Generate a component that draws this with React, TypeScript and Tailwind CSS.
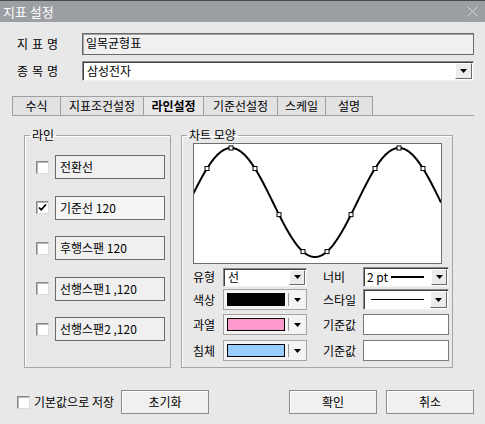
import React from 'react'

const tabs = [
  { label: '수식', w: 'w-[48px]' },
  { label: '지표조건설정', w: 'w-[83px]' },
  { label: '라인설정', w: 'w-[60px]', active: true },
  { label: '기준선설정', w: 'w-[74px]' },
  { label: '스케일', w: 'w-[48px]' },
  { label: '설명', w: 'w-[48px]' },
]

const lines = [
  { label: '전환선', checked: false },
  { label: '기준선 120', checked: true },
  { label: '후행스팬 120', checked: false },
  { label: '선행스팬1 ,120', checked: false },
  { label: '선행스팬2 ,120', checked: false },
]

// sine wave in page coordinates (chart inner area starts at 193,144)
const PEAK = 230
const PERIOD = 168
const MID = 202.5
const AMP = 54.5
const waveY = (x: number) => MID - AMP * Math.cos(((x - PEAK) / PERIOD) * Math.PI * 2)
const wavePath = Array.from({ length: 249 }, (_, i) => {
  const x = 192 + i
  return `${i === 0 ? 'M' : 'L'}${x} ${waveY(x).toFixed(2)}`
}).join(' ')
const markers = Array.from({ length: 10 }, (_, i) => 206 + i * 24)

function Arrow() {
  return (
    <svg width="7" height="4" viewBox="0 0 7 4">
      <path d="M0 0h7L3.5 4z" fill="#000" />
    </svg>
  )
}

function DropBtn({ className = '' }: { className?: string }) {
  return (
    <div className={`flex items-center justify-center bg-[#ececec] border border-t-white border-l-white border-r-[#6b6b6b] border-b-[#6b6b6b] ${className}`}>
      <Arrow />
    </div>
  )
}

function CheckBox({ checked }: { checked?: boolean }) {
  return (
    <div className="w-[13px] h-[13px] shrink-0 bg-white border border-[#8a8a8a] border-r-[#dcdcdc] border-b-[#dcdcdc] shadow-[inset_1px_1px_0_#b5b5b5] flex items-center justify-center">
      {checked && (
        <svg width="9" height="9" viewBox="0 0 9 9">
          <path d="M1 4.5l2.2 2.3L8 1.5" stroke="#000" strokeWidth="1.8" fill="none" />
        </svg>
      )}
    </div>
  )
}

function ColorCombo({ color }: { color: string }) {
  return (
    <div className="w-[84px] h-full bg-[#f4f4f4] border border-[#a3a3a3] flex items-center pl-[3px]">
      <div className={`w-[58px] h-[13px] border border-black ${color}`} />
      <div className="w-px h-[13px] bg-[#9a9a9a] ml-[3px]" />
      <div className="ml-[5px]">
        <Arrow />
      </div>
    </div>
  )
}

function Btn({ label }: { label: string }) {
  return (
    <button className="w-[88px] h-[24px] bg-[#f0f0f0] border border-[#8c8c8c] shadow-[inset_1px_1px_0_#fff] text-[12px] text-black">
      {label}
    </button>
  )
}

export default function App() {
  return (
    <div className="w-[485px] h-[424px] bg-[#e8e8e8] font-['Noto_Sans_CJK_KR','Noto_Sans',sans-serif] text-[12px] text-black leading-none overflow-hidden select-none">

      {/* Title bar */}
      <div className="h-[22px] border-t border-[#4a4a4a] bg-[#9b9ea3] flex items-center justify-between pl-[3px] pr-[7px]">
        <span className="text-white text-[13px] leading-none">지표 설정</span>
        <svg width="11" height="11" viewBox="0 0 11 11">
          <path d="M0.5 0.5l10 10M10.5 0.5l-10 10" stroke="#dadada" strokeWidth="1" />
        </svg>
      </div>

      {/* 지표명 */}
      <div className="flex items-center mt-[11px] ml-[17px]">
        <div className="w-[65px] flex gap-[4px]">
          <span>지</span><span>표</span><span>명</span>
        </div>
        <div className="w-[392px] h-[22px] bg-[#f0f0f0] border border-[#6a6a6a] shadow-[inset_1px_1px_0_#a0a0a0] pl-[3px] pt-[3px]">
          일목균형표
        </div>
      </div>

      {/* 종목명 */}
      <div className="flex items-center mt-[6px] ml-[17px]">
        <div className="w-[65px] flex gap-[4px]">
          <span>종</span><span>목</span><span>명</span>
        </div>
        <div className="w-[392px] h-[20px] bg-white border border-[#8a8a8a] border-r-[#f0f0f0] border-b-[#f0f0f0] shadow-[inset_1px_1px_0_#404040] flex items-center justify-between pl-[4px] pr-[1px]">
          <span>삼성전자</span>
          <DropBtn className="w-[17px] h-[16px]" />
        </div>
      </div>

      {/* Tabs */}
      <div className="flex ml-[12px] mt-[15px] w-[462px] h-[20px] border-b border-[#a0a0a0]">
        {tabs.map((t, i) => (
          <div
            key={t.label}
            className={`${t.w} h-full flex items-center justify-center border-t border-l border-[#a0a0a0] ${i === tabs.length - 1 ? 'border-r' : ''} ${t.active ? 'font-bold bg-[#e8e8e8]' : 'bg-[#e2e2e2]'}`}
          >
            {t.label}
          </div>
        ))}
      </div>

      {/* Groups */}
      <div className="flex ml-[24px] mt-[12px] gap-[10px]">
        {/* 라인 */}
        <fieldset className="w-[147px] h-[240px] border border-[#a6a6a6] shadow-[inset_1px_1px_0_#fff] px-0">
          <legend className="ml-[5px] px-[2px] leading-[14px]">라인</legend>
          <div className="flex flex-col gap-[16.5px] mt-[13px] pl-[11px]">
            {lines.map(l => (
              <div key={l.label} className="flex items-center h-[24px]">
                <CheckBox checked={l.checked} />
                <div className={`ml-[6px] w-[110px] h-full border border-[#6a6a6a] flex items-center pl-[4px] ${l.checked ? 'bg-[#f5f5f5]' : 'bg-[#f0f0f0]'}`}>
                  {l.label}
                </div>
              </div>
            ))}
          </div>
        </fieldset>

        {/* 차트 모양 */}
        <fieldset className="w-[272px] h-[240px] border border-[#a6a6a6] shadow-[inset_1px_1px_0_#fff] px-0">
          <legend className="ml-[5px] px-[2px] leading-[14px]">차트 모양</legend>
          <div className="ml-[11px] mt-[1px] w-[249px] h-[121px] bg-white border border-[#6e6e6e]">
            <svg width="247" height="119" viewBox="193 144 247 119" className="block">
              <path d={wavePath} stroke="#000" strokeWidth="2" fill="none" />
              {markers.map(x => (
                <rect key={x} x={x - 2} y={waveY(x) - 2} width="4" height="4" fill="#fff" stroke="#000" strokeWidth="1" />
              ))}
            </svg>
          </div>

          <div className="ml-[11px] flex flex-col">
            {/* row 1 */}
            <div className="flex items-center h-[20px] mt-[3px]">
              <span className="w-[30px]">유형</span>
              <div className="w-[84px] h-[19px] bg-white border border-[#8a8a8a] border-r-[#f0f0f0] border-b-[#f0f0f0] shadow-[inset_1px_1px_0_#404040] flex items-center justify-between pl-[4px] pr-[1px]">
                <span>선</span>
                <DropBtn className="w-[16px] h-[15px]" />
              </div>
              <span className="w-[40px] ml-[16px]">너비</span>
              <div className="w-[86px] h-[20px] bg-white border border-[#8a8a8a] border-r-[#f0f0f0] border-b-[#f0f0f0] shadow-[inset_1px_1px_0_#404040] flex items-center pl-[3px] pr-[1px]">
                <span>2 pt</span>
                <div className="w-[33px] h-[2px] bg-black ml-[3px]" />
                <DropBtn className="w-[16px] h-[16px] ml-auto" />
              </div>
            </div>
            {/* row 2 */}
            <div className="flex items-center h-[21px] mt-[2px]">
              <span className="w-[30px]">색상</span>
              <ColorCombo color="bg-black" />
              <span className="w-[40px] ml-[16px]">스타일</span>
              <div className="w-[86px] h-[21px] bg-white border border-[#8a8a8a] border-r-[#f0f0f0] border-b-[#f0f0f0] shadow-[inset_1px_1px_0_#404040] flex items-center pl-[7px] pr-[1px]">
                <div className="w-[53px] h-px bg-black" />
                <DropBtn className="w-[17px] h-[17px] ml-auto" />
              </div>
            </div>
            {/* row 3 */}
            <div className="flex items-center h-[21px] mt-[4px]">
              <span className="w-[30px]">과열</span>
              <ColorCombo color="bg-[#ff99cc]" />
              <span className="w-[40px] ml-[16px]">기준값</span>
              <div className="w-[86px] h-[21px] bg-white border border-[#7a7a7a]" />
            </div>
            {/* row 4 */}
            <div className="flex items-center h-[21px] mt-[5px]">
              <span className="w-[30px]">침체</span>
              <ColorCombo color="bg-[#99ccff]" />
              <span className="w-[40px] ml-[16px]">기준값</span>
              <div className="w-[86px] h-[21px] bg-white border border-[#7a7a7a]" />
            </div>
          </div>
        </fieldset>
      </div>

      {/* Bottom */}
      <div className="flex items-center mt-[22px] ml-[17px] mr-[11px]">
        <CheckBox />
        <span className="ml-[4px]">기본값으로 저장</span>
        <div className="ml-[7px]">
          <Btn label="초기화" />
        </div>
        <div className="ml-auto flex gap-[9px]">
          <Btn label="확인" />
          <Btn label="취소" />
        </div>
      </div>
    </div>
  )
}
